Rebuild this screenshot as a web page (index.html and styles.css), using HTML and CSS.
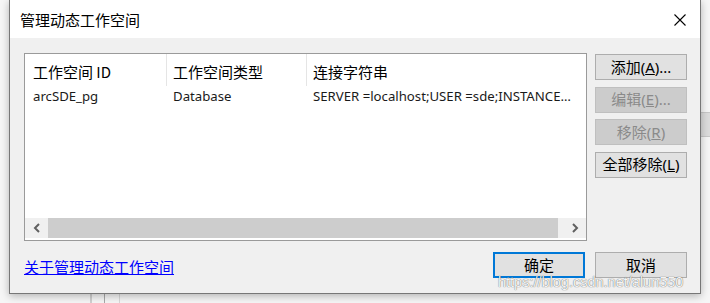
FILE: index.html
```html
<!DOCTYPE html>
<html lang="zh-CN">
<head>
<meta charset="utf-8">
<title>管理动态工作空间</title>
<link rel="stylesheet" href="styles.css">
</head>
<body>
<div class="screen">
  <div class="top">
    <div class="dialog">
      <div class="titlebar">
        <span class="title">管理动态工作空间</span>
        <span class="close">
          <svg width="12" height="12" viewBox="0 0 12 12"><path d="M0.5 0.5 L11.5 11.5 M11.5 0.5 L0.5 11.5" stroke="#000" stroke-width="1.1" fill="none"/></svg>
        </span>
      </div>
      <div class="body">
        <div class="main">
          <div class="list">
            <div class="list-head">
              <div class="col c1">工作空间 ID</div>
              <div class="col c2">工作空间类型</div>
              <div class="col c3">连接字符串</div>
            </div>
            <div class="list-row">
              <div class="cell c1">arcSDE_pg</div>
              <div class="cell c2">Database</div>
              <div class="cell c3">SERVER =localhost;USER =sde;INSTANCE…</div>
            </div>
            <div class="list-fill"></div>
            <div class="hscroll">
              <span class="arrow">
                <svg width="8" height="10" viewBox="0 0 8 10"><path d="M6 1 L2 5 L6 9" stroke="#606060" stroke-width="2" fill="none"/></svg>
              </span>
              <span class="thumb"></span>
              <span class="track"></span>
              <span class="arrow">
                <svg width="8" height="10" viewBox="0 0 8 10"><path d="M2 1 L6 5 L2 9" stroke="#606060" stroke-width="2" fill="none"/></svg>
              </span>
            </div>
          </div>
          <div class="side">
            <button class="btn">添加(<u>A</u>)...</button>
            <button class="btn disabled">编辑(<u>E</u>)...</button>
            <button class="btn disabled">移除(<u>R</u>)</button>
            <button class="btn">全部移除(<u>L</u>)</button>
          </div>
        </div>
        <div class="footer">
          <a class="link" href="#">关于管理动态工作空间</a>
          <div class="footer-buttons">
            <button class="btn default">确定</button>
            <button class="btn">取消</button>
          </div>
        </div>
      </div>
      <div class="watermark">https://blog.csdn.net/alun550</div>
    </div>
    <div class="right-strip"><div class="right-block"></div></div>
  </div>
  <div class="bottom-strip">
    <span class="vline l1"></span>
    <span class="vline l2"></span>
    <span class="vline l3"></span>
  </div>
</div>
</body>
</html>
```
FILE: styles.css
```css
* { box-sizing: border-box; }
html, body {
  margin: 0;
  padding: 0;
  background: #f6f6f6;
  width: 710px;
  height: 303px;
  overflow: hidden;
}
body {
  font-family: "Noto Sans", "Noto Sans CJK SC", sans-serif;
  font-size: 15px;
  color: #000;
}
.screen {
  display: flex;
  flex-direction: column;
}
.top {
  display: flex;
  padding-left: 9px;
}
.dialog {
  position: relative;
  width: 692px;
  height: 294px;
  border: 1px solid #777;
  border-top: none;
  background: #f0f0f0;
  box-shadow: 0 2px 8px rgba(0,0,0,0.28);
  display: flex;
  flex-direction: column;
}
.titlebar {
  height: 38px;
  background: #fff;
  display: flex;
  align-items: center;
  justify-content: space-between;
  padding: 1px 14px 0 10px;
}
.title {
  font-family: "Noto Sans CJK SC", sans-serif;
  font-size: 15px;
  line-height: 15px;
}
.close {
  display: flex;
  width: 12px;
  height: 12px;
  margin-top: 1px;
}
.body {
  flex: 1;
  padding: 15px 13px 0 14px;
  display: flex;
  flex-direction: column;
}
.main {
  display: flex;
  gap: 8px;
}
.list {
  width: 563px;
  height: 188px;
  border: 1px solid #9a9a9a;
  background: #fff;
  display: flex;
  flex-direction: column;
}
.list-head {
  height: 32px;
  display: flex;
  font-family: "Noto Sans CJK SC", sans-serif;
  font-size: 15px;
  line-height: 15px;
}
.col {
  display: flex;
  align-items: center;
  padding-top: 2px;
  border-right: 1px solid #e5e5e5;
}
.c1 { width: 142px; padding-left: 8px; }
.c2 { width: 140px; padding-left: 6px; }
.c3 { flex: 1; padding-left: 6px; border-right: none; }
.list-row {
  height: 20px;
  display: flex;
  align-items: center;
  font-size: 13.2px;
  line-height: 20px;
  color: #1a1a1a;
  white-space: nowrap;
}
.cell { overflow: hidden; }
.cell.c1, .cell.c2 { border-right: 1px solid transparent; }
.list-fill { flex: 1; }
.hscroll {
  height: 20px;
  margin-bottom: 2px;
  display: flex;
  background: #f0f0f0;
}
.arrow {
  width: 23px;
  display: flex;
  align-items: center;
  justify-content: center;
}
.thumb {
  width: 510px;
  background: #cdcdcd;
}
.track { flex: 1; }
.side {
  width: 92px;
  margin-top: 1px;
  display: flex;
  flex-direction: column;
  gap: 6.5px;
}
.btn {
  width: 92px;
  height: 26px;
  padding: 0;
  margin: 0;
  background: #e1e1e1;
  border: 1px solid #adadad;
  font-family: "Noto Sans", "Noto Sans CJK SC", sans-serif;
  font-size: 15px;
  line-height: 15px;
  color: #000;
  display: flex;
  align-items: center;
  justify-content: center;
}
.btn u { text-decoration: underline; text-underline-offset: 1px; }
.btn.disabled {
  background: #cccccc;
  border-color: #bfbfbf;
  color: #8a8a8a;
}
.btn.default {
  border: 2px solid #0078d7;
}
.footer {
  margin-top: 11px;
  display: flex;
  align-items: center;
  justify-content: space-between;
}
.link {
  font-family: "Noto Sans CJK SC", sans-serif;
  font-size: 15px;
  line-height: 15px;
  color: #0000ff;
  text-decoration: underline;
  padding-top: 2px;
}
.footer-buttons {
  display: flex;
  gap: 10px;
}
.watermark {
  position: absolute;
  left: 488px;
  top: 274px;
  font-family: "Liberation Sans", sans-serif;
  font-size: 14.5px;
  line-height: 16px;
  color: rgba(255,255,255,0.95);
  text-shadow: 0 0 1px rgba(0,0,0,0.55), 0 0 1px rgba(0,0,0,0.3);
  white-space: nowrap;
}
.right-strip {
  flex: 1;
  padding-top: 112px;
}
.right-block {
  height: 25px;
  background: #dcdcdc;
  border-top: 1px solid #c8c8c8;
  border-bottom: 1px solid #c8c8c8;
}
.bottom-strip {
  height: 10px;
  display: flex;
  padding-left: 90px;
}
.vline {
  width: 1px;
  height: 10px;
  background: #c0c0c0;
}
.l1 { width: 2px; background: #d0d0d0; }
.l2 { margin-left: 12px; background: #a8a8a8; }
.l3 { margin-left: 14px; background: #d8d8d8; }
```
